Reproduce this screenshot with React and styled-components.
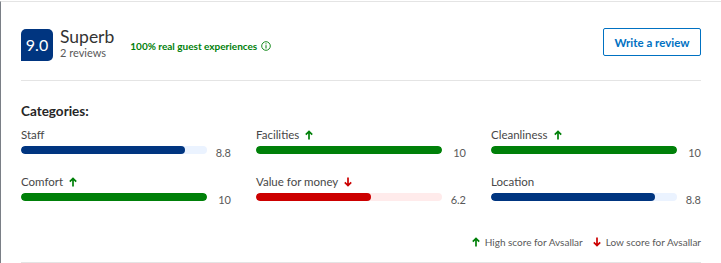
import React from 'react';
import styled, { createGlobalStyle } from 'styled-components';

const GlobalStyle = createGlobalStyle`
  html, body {
    margin: 0;
    padding: 0;
    background: #fff;
  }
  body {
    font-family: Lato, "Open Sans", Arial, sans-serif;
    color: #333;
  }
`;

const Panel = styled.div`
  margin-top: 1px;
  border-top: 1px solid #e4e4e4;
  border-left: 1px solid #7a7f86;
  padding: 26px 20px 0 20px;
  height: 262px;
  box-sizing: border-box;
`;

const Header = styled.div`
  display: flex;
  justify-content: space-between;
  align-items: flex-start;
  padding-bottom: 19px;
  border-bottom: 1px solid #e4e4e4;
`;

const HeaderLeft = styled.div`
  display: flex;
  align-items: center;
  gap: 7px;
`;

const ScoreBadge = styled.div`
  width: 32px;
  height: 32px;
  background: #003580;
  color: #fff;
  border-radius: 5px 5px 5px 0;
  display: flex;
  align-items: center;
  justify-content: center;
  font-size: 16px;
`;

const ScoreText = styled.div`
  display: flex;
  flex-direction: column;
  padding-bottom: 2px;
`;

const ScoreWord = styled.div`
  font-size: 17.5px;
  line-height: 18px;
  color: #333;
`;

const ReviewCount = styled.div`
  font-size: 11px;
  line-height: 13px;
  color: #595959;
`;

const Verified = styled.div`
  display: flex;
  align-items: center;
  gap: 4px;
  margin-left: 9px;
  margin-top: 2px;
  color: #008009;
  font-size: 10px;
  font-weight: 700;
`;

const WriteButton = styled.button`
  font-family: inherit;
  height: 28px;
  width: 98px;
  background: #fff;
  color: #0071c2;
  border: 1px solid #0071c2;
  border-radius: 2px;
  font-size: 11.5px;
  font-weight: 700;
  padding: 0;
  cursor: pointer;
`;

const Title = styled.div`
  font-size: 13.5px;
  font-weight: 700;
  color: #262626;
  margin-top: 21px;
  line-height: 18px;
`;

const Grid = styled.div`
  display: grid;
  grid-template-columns: repeat(3, 210px);
  column-gap: 25px;
  row-gap: 15px;
  margin-top: 7px;
`;

const Category = styled.div`
  display: flex;
  flex-direction: column;
`;

const Label = styled.div`
  display: flex;
  align-items: center;
  gap: 6px;
  font-size: 11.5px;
  line-height: 16px;
  color: #474747;
`;

const BarRow = styled.div`
  display: flex;
  align-items: flex-start;
  margin-top: 3px;
`;

const Track = styled.div`
  flex: 1;
  height: 8px;
  border-radius: 4px;
  background: ${p => p.$track};
  overflow: hidden;
`;

const Fill = styled.div`
  height: 100%;
  border-radius: 4px;
  background: ${p => p.$color};
`;

const Value = styled.div`
  width: 24px;
  text-align: right;
  font-size: 11px;
  line-height: 12px;
  color: #595959;
  margin-top: 1px;
`;

const Legend = styled.div`
  display: flex;
  justify-content: flex-end;
  align-items: center;
  gap: 10px;
  margin-top: 29px;
  line-height: 14px;
  padding-bottom: 13px;
  border-bottom: 1px solid #e4e4e4;
  font-size: 10px;
  color: #595959;
`;

const LegendItem = styled.div`
  display: flex;
  align-items: center;
  gap: 5px;
`;

const Arrow = ({ down }) => (
  <svg width="8" height="10" viewBox="0 0 8 10">
    {down ? (
      <path d="M4 0.5V8.5M0.8 5.3L4 8.5L7.2 5.3" stroke="#cc0000" strokeWidth="1.7" fill="none" />
    ) : (
      <path d="M4 9.5V1.5M0.8 4.7L4 1.5L7.2 4.7" stroke="#008009" strokeWidth="1.7" fill="none" />
    )}
  </svg>
);

const InfoIcon = () => (
  <svg width="10" height="10" viewBox="0 0 10 10">
    <circle cx="5" cy="5" r="4.3" stroke="#008009" strokeWidth="0.9" fill="none" />
    <path d="M5 4.2V7.5" stroke="#008009" strokeWidth="1" />
    <circle cx="5" cy="2.8" r="0.6" fill="#008009" />
  </svg>
);

const themes = {
  blue: { color: '#003580', track: '#ebf3ff' },
  green: { color: '#008009', track: '#e7fde9' },
  red: { color: '#cc0000', track: '#ffebeb' },
};

const categories = [
  { name: 'Staff', score: 8.8, kind: 'blue' },
  { name: 'Facilities', score: 10, kind: 'green', trend: 'up' },
  { name: 'Cleanliness', score: 10, kind: 'green', trend: 'up' },
  { name: 'Comfort', score: 10, kind: 'green', trend: 'up' },
  { name: 'Value for money', score: 6.2, kind: 'red', trend: 'down' },
  { name: 'Location', score: 8.8, kind: 'blue' },
];

const App = () => {
  return (
    <>
      <GlobalStyle />
      <Panel>
        <Header>
          <HeaderLeft>
            <ScoreBadge>9.0</ScoreBadge>
            <ScoreText>
              <ScoreWord>Superb</ScoreWord>
              <ReviewCount>2 reviews</ReviewCount>
            </ScoreText>
            <Verified>
              100% real guest experiences
              <InfoIcon />
            </Verified>
          </HeaderLeft>
          <WriteButton>Write a review</WriteButton>
        </Header>
        <Title>Categories:</Title>
        <Grid>
          {categories.map(c => {
            const t = themes[c.kind];
            return (
              <Category key={c.name}>
                <Label>
                  {c.name}
                  {c.trend && <Arrow down={c.trend === 'down'} />}
                </Label>
                <BarRow>
                  <Track $track={t.track}>
                    <Fill $color={t.color} style={{ width: `${c.score * 10}%` }} />
                  </Track>
                  <Value>{c.score}</Value>
                </BarRow>
              </Category>
            );
          })}
        </Grid>
        <Legend>
          <LegendItem>
            <Arrow />
            High score for Avsallar
          </LegendItem>
          <LegendItem>
            <Arrow down />
            Low score for Avsallar
          </LegendItem>
        </Legend>
      </Panel>
    </>
  );
};

export default App;
